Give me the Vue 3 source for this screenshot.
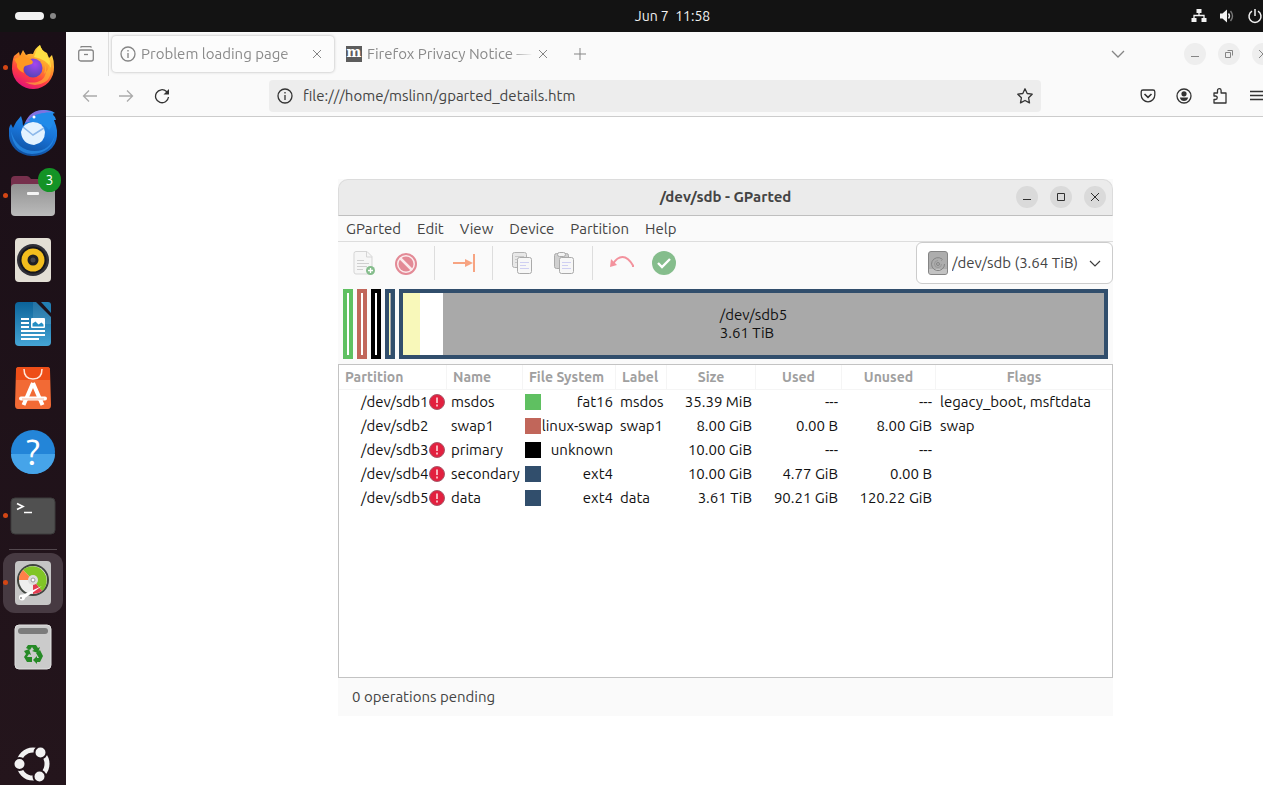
<template>
    <div class="desktop">
        <header class="topbar">
            <button class="activities" aria-label="Activities">
                <span class="workspace-pill"></span>
                <span class="workspace-dot"></span>
            </button>
            <time class="clock">Jun 7&nbsp; 11:58</time>
            <div class="tray">
                <svg width="16" height="16" viewBox="0 0 16 16">
                    <path d="M5.500 1h5v4h-5zM0.500 10h5v4h-5zM10.500 10h5v4h-5z" fill="#f2f2f2" />
                    <path d="M8 5v2.500M3 10V7.500h10V10" fill="none" stroke="#f2f2f2" stroke-width="1.300" />
                </svg>
                <svg width="16" height="16" viewBox="0 0 16 16">
                    <path d="M1 5.500h2.500L8 1.500v13L3.500 10.500H1z" fill="#f2f2f2" />
                    <path d="M9.500 5.500q2 2.500 0 5" fill="none" stroke="#f2f2f2" stroke-width="1.400" />
                    <path d="M11.500 3q4 5 0 10" fill="none" stroke="#777" stroke-width="1.400" />
                </svg>
                <svg width="16" height="16" viewBox="0 0 16 16" fill="none" stroke="#f2f2f2" stroke-width="1.500">
                    <path d="M5 3.200A6 6 0 1 0 11 3.200M8 1v7" />
                </svg>
            </div>
        </header>

        <div class="workspace">
            <nav class="dock" aria-label="Dock">
                <button class="dock-item running" aria-label="Firefox">
                    <svg width="48" height="48" viewBox="0 0 48 48">
                        <defs>
                            <linearGradient id="fox" x1="0.800" y1="0" x2="0.300" y2="1">
                                <stop offset="0" stop-color="#fff14a" />
                                <stop offset="0.400" stop-color="#ff9a2a" />
                                <stop offset="0.700" stop-color="#ff4040" />
                                <stop offset="1" stop-color="#e0107a" />
                            </linearGradient>
                            <radialGradient id="globe" cx="0.600" cy="0.300" r="0.800">
                                <stop offset="0" stop-color="#a545f0" />
                                <stop offset="1" stop-color="#4b45b0" />
                            </radialGradient>
                        </defs>
                        <path d="M5 12L10 8 11 12 14 6 17 11Q21 9 24 10Q26 4 31 1Q32 6 38 9L40 14 43 11Q45 16 45 23A21 21 0 0 1 3 25Q3 17 5 12Z" fill="url(#fox)" />
                        <path d="M25 13q3-9 6-12q1 5 6 9q5 6 5 14q-5-9-17-11z" fill="#ffe044" />
                        <circle cx="24" cy="24" r="9.500" fill="url(#globe)" />
                        <path d="M5 15l5-2 4-4 3 5q5 0 7 4l-1 2-7 2q-3 3-1 7q-8-3-7-9z" fill="#ff9822" />
                        <path d="M30 14q9 6 5 16q6-5 5-12q5 14-4 20q-10 6-20 0q19 3 21-10q1-8-7-14z" fill="#ffbe32" opacity=".6" />
                    </svg>
                </button>
                <button class="dock-item" aria-label="Thunderbird">
                    <svg width="48" height="48" viewBox="0 0 48 48">
                        <defs>
                            <linearGradient id="bird" x1="0.700" y1="0" x2="0.400" y2="1">
                                <stop offset="0" stop-color="#2894f0" />
                                <stop offset="0.500" stop-color="#1874d8" />
                                <stop offset="1" stop-color="#104f9f" />
                            </linearGradient>
                        </defs>
                        <path d="M16 15Q22 2 36 2Q42 2 46 5L43 6Q46 8 47 12L45 12Q49 22 48 28A24 21 0 0 1 0 26Q-1 20 2 16Q3 18 4 20Q7 13 12 8Q14 13 14 18Z" fill="url(#bird)" />
                        <path d="M16 15Q21 2 35 2L44 4Q29 4 25 12Z" fill="#7f72e0" />
                        <path d="M19 12Q28 3 44 5Q46 16 40 22Q34 14 24 14Z" fill="#218be9" />
                        <path d="M12 24Q14 15 24 14Q34 14 36 24Q36 35 25 37Q13 36 12 24z" fill="#e3f2ff" />
                        <path d="M14 19l10 8 11-7" fill="none" stroke="#8cb8ea" stroke-width="1.500" />
                        <path d="M2 23q6 20 24 20q15 0 20-16q-3 18-23 19Q4 45 2 23z" fill="#2b91ed" opacity=".7" />
                        <circle cx="25" cy="9" r="1.500" fill="#fff" />
                    </svg>
                </button>
                <button class="dock-item running" aria-label="Files">
                    <svg width="48" height="48" viewBox="0 0 48 48">
                        <defs>
                            <linearGradient id="metal" x1="0" y1="0" x2="0" y2="1">
                                <stop offset="0" stop-color="#929292" />
                                <stop offset="1" stop-color="#bbb" />
                            </linearGradient>
                        </defs>
                        <path d="M2 8q0-4 4-4h12q2 0 4 3h20q4 0 4 4v12H2z" fill="#76304c" />
                        <rect x="2" y="12" width="44" height="32" rx="4" fill="url(#metal)" />
                        <rect x="18" y="20" width="12" height="3" rx="1" fill="#f4f4f4" />
                    </svg>
                    <span class="badge">3</span>
                </button>
                <button class="dock-item" aria-label="Rhythmbox">
                    <svg width="48" height="48" viewBox="0 0 48 48">
                        <rect x="6" y="2" width="36" height="44" rx="4" fill="#e3dfd5" />
                        <circle cx="24" cy="24" r="16" fill="#303038" />
                        <circle cx="24" cy="24" r="13.500" fill="#17171c" />
                        <circle cx="24" cy="24" r="11.500" fill="#f2bd1d" />
                        <circle cx="24" cy="24" r="5.500" fill="#202024" />
                        <circle cx="24" cy="24" r="2.500" fill="#45454b" />
                    </svg>
                </button>
                <button class="dock-item" aria-label="LibreOffice Writer">
                    <svg width="48" height="48" viewBox="0 0 48 48">
                        <defs>
                            <linearGradient id="writer" x1="0" y1="0" x2="0" y2="1">
                                <stop offset="0" stop-color="#0b6399" />
                                <stop offset="1" stop-color="#45a5d5" />
                            </linearGradient>
                        </defs>
                        <path d="M10 2h17l15 15v25q0 4-4 4H10q-4 0-4-4V6q0-4 4-4z" fill="url(#writer)" />
                        <path d="M24 2h3l15 15v7H24z" fill="#fff" opacity=".1" />
                        <path d="M32 2h7q3 0 3 3v8z" fill="#227eb2" />
                        <path d="M12 19h8M12 23h8M12 27h8M12 31h24M12 35h24M12 39h18" stroke="#fff" stroke-width="2" />
                        <rect x="22" y="18" width="14" height="10" rx="1" fill="#fff" />
                        <path d="M23.500 26.500v-3l3-2 3 3 3-2 2 2v2z" fill="#258fc4" />
                    </svg>
                </button>
                <button class="dock-item" aria-label="App Center">
                    <svg width="48" height="48" viewBox="0 0 48 48">
                        <path d="M10 3h28q3 0 3 3l1 35q0 4-3 4H9q-3 0-3-4L7 6q0-3 3-3z" fill="#f26a35" />
                        <path d="M10 3h28q3 0 3 3v10H7V6q0-3 3-3z" fill="#ee4e18" />
                        <path d="M15 5q0 10 9 10t9-10" fill="none" stroke="#ffe8dc" stroke-width="1.500" />
                        <g stroke="#fff" fill="none">
                            <path d="M24 19L14.500 41M24 19l9.500 22" stroke-width="4" />
                            <path d="M12 34.500h24" stroke-width="4" stroke-linecap="round" />
                        </g>
                        <path d="M13 35h22" stroke="#f6b8a0" />
                    </svg>
                </button>
                <button class="dock-item" aria-label="Help">
                    <svg width="48" height="48" viewBox="0 0 48 48">
                        <circle cx="24" cy="24" r="22" fill="#2385d8" />
                        <path d="M2 26a22 20 0 0 0 44 0z" fill="#46a4e9" />
                        <text x="24" y="37" text-anchor="middle" class="help-glyph">?</text>
                    </svg>
                </button>
                <button class="dock-item running" aria-label="Terminal">
                    <svg width="48" height="48" viewBox="0 0 48 48">
                        <rect x="2" y="6" width="44" height="36" rx="4" fill="#505050" stroke="#3c3c3c" />
                        <path d="M8 11.500l6 3-6 3" fill="none" stroke="#fff" stroke-width="1.700" />
                        <path d="M15 20.500h8" stroke="#fff" stroke-width="1.500" />
                    </svg>
                </button>
                <hr class="dock-separator" />
                <button class="dock-item running active" aria-label="GParted">
                    <svg width="48" height="48" viewBox="0 0 48 48">
                        <rect x="6" y="2" width="36" height="44" rx="4" fill="#c5c5c5" />
                        <circle cx="24" cy="21" r="16" fill="#404540" />
                        <circle cx="24" cy="21" r="14" fill="#eee" />
                        <path d="M24 21L14 11A14 14 0 1 1 33 32z" fill="#81c526" />
                        <path d="M24 21H10a14 14 0 0 1 4-10z" fill="#ff8148" />
                        <path d="M24 21l9 11q-4 3-9 3z" fill="#e33c50" />
                        <circle cx="24" cy="21" r="5" fill="#ddd" />
                        <circle cx="24" cy="21" r="2" fill="#fff" stroke="#999" />
                        <path d="M33 27L11 37l2 4z" fill="#fff" />
                        <circle cx="13" cy="38.500" r="3" fill="#fff" />
                        <circle cx="12" cy="39" r="1" fill="#888" />
                    </svg>
                </button>
                <button class="dock-item" aria-label="Trash">
                    <svg width="48" height="48" viewBox="0 0 48 48">
                        <rect x="6" y="2" width="36" height="44" rx="4" fill="#cbcbcb" stroke="#e0e0e0" />
                        <rect x="9" y="5" width="30" height="6" rx="3" fill="#7c7c7c" />
                        <g fill="#268a26">
                            <path d="M19 22h8l2 3 2-1-2 6-6-2 2-1-2-3-2 3-4-2z" />
                            <path d="M15 28l5-2 2 6-2-1-2 3h5v5h-5l-3-5 2-3z" />
                            <path d="M31 27l3 6-3 6h-3v2l-4-4 4-4v2h2l-3-5z" />
                        </g>
                    </svg>
                </button>
                <button class="dock-item show-apps" aria-label="Show Applications">
                    <svg width="48" height="48" viewBox="0 0 48 48">
                        <circle cx="24" cy="24" r="14" fill="none" stroke="#f2f2f2" stroke-width="5" />
                        <g fill="#f2f2f2" stroke="#22141b" stroke-width="2">
                            <circle cx="10.500" cy="24" r="6" />
                            <circle cx="31.500" cy="12.500" r="6" />
                            <circle cx="30.500" cy="36.500" r="6" />
                        </g>
                    </svg>
                </button>
            </nav>

            <main class="browser">
                <div class="tab-strip">
                    <button class="history-btn" aria-label="Firefox View">
                        <svg width="16" height="16" viewBox="0 0 16 16" class="line muted">
                            <path d="M2.500 1.500Q3 0.500 4 0.500h8q1 0 1.500 1" />
                            <rect x="0.700" y="4" width="14.600" height="11" rx="2" />
                            <path d="M6 8.500h4" />
                        </svg>
                    </button>
                    <div class="tab selected">
                        <svg width="16" height="16" viewBox="0 0 16 16" class="line muted">
                            <circle cx="8" cy="8" r="7" />
                            <path d="M8 7v5M8 4v1.500" />
                        </svg>
                        <span class="tab-title">Problem loading page</span>
                        <button class="tab-close" aria-label="Close tab">
                            <svg width="8" height="8" viewBox="0 0 8 8" class="line muted thin"><path d="M0 0l8 8M8 0L0 8" /></svg>
                        </button>
                    </div>
                    <div class="tab">
                        <span class="favicon">m</span>
                        <span class="tab-title">Firefox Privacy Notice —</span>
                        <button class="tab-close" aria-label="Close tab">
                            <svg width="8" height="8" viewBox="0 0 8 8" class="line muted thin"><path d="M0 0l8 8M8 0L0 8" /></svg>
                        </button>
                    </div>
                    <button class="tool new-tab" aria-label="New tab">
                        <svg width="12" height="12" viewBox="0 0 12 12" class="line muted thin"><path d="M6 0v12M0 6h12" /></svg>
                    </button>
                    <button class="tool all-tabs" aria-label="List all tabs">
                        <svg width="14" height="14" viewBox="0 0 14 14" class="line muted"><path d="M1 4l6 6 6-6" /></svg>
                    </button>
                    <div class="window-controls faded">
                        <button v-for="c in browserControls" :key="c.label" class="round" :aria-label="c.label">
                            <svg width="10" height="10" viewBox="0 0 10 10"><path :d="c.path" /></svg>
                        </button>
                    </div>
                </div>

                <div class="nav-bar">
                    <button class="tool" aria-label="Back">
                        <svg width="16" height="16" viewBox="0 0 16 16" class="line disabled"><path d="M15 8H1.500M7 2.500L1.500 8 7 13.500" /></svg>
                    </button>
                    <button class="tool" aria-label="Forward">
                        <svg width="16" height="16" viewBox="0 0 16 16" class="line disabled"><path d="M1 8h13.500M9 2.500L14.500 8 9 13.500" /></svg>
                    </button>
                    <button class="tool" aria-label="Reload">
                        <svg width="16" height="16" viewBox="0 0 16 16" class="line">
                            <path d="M14.500 9A6.500 6.500 0 1 1 12.500 3.500L14 5" />
                            <path d="M15 1v5.500H9.500z" fill="#333" stroke="none" />
                        </svg>
                    </button>
                    <div class="url-bar">
                        <svg width="16" height="16" viewBox="0 0 16 16" class="line">
                            <circle cx="8" cy="8" r="7" />
                            <path d="M8 7v5M8 4v1.500" />
                        </svg>
                        <input v-model="url" type="text" aria-label="Address" />
                        <button class="star" aria-label="Bookmark this page">
                            <svg width="16" height="16" viewBox="0 0 16 16" class="line">
                                <path d="M8 0.800l2.200 4.700 5 .7-3.600 3.600.9 5.100L8 12.500l-4.500 2.400.9-5.100L.8 6.200l5-.7z" stroke-linejoin="round" />
                            </svg>
                        </button>
                    </div>
                    <button class="tool" aria-label="Save to Pocket">
                        <svg width="16" height="16" viewBox="0 0 16 16" class="line">
                            <path d="M3 2h10q1.800 0 1.800 1.800V7a6.800 6.800 0 0 1-13.600 0V3.800Q1.200 2 3 2z" />
                            <path d="M4.500 6L8 9.300 11.500 6" stroke-width="1.600" />
                        </svg>
                    </button>
                    <button class="tool" aria-label="Account">
                        <svg width="16" height="16" viewBox="0 0 16 16" class="line">
                            <circle cx="8" cy="8" r="7" />
                            <circle cx="8" cy="5.800" r="2.600" fill="#333" stroke="none" />
                            <path d="M3.800 9.500h8.400q-1 3.500-4.200 3.500T3.800 9.500z" fill="#333" stroke="none" />
                        </svg>
                    </button>
                    <button class="tool" aria-label="Extensions">
                        <svg width="16" height="16" viewBox="0 0 16 16" class="line">
                            <path d="M2 5h3.500V2.500a1.800 1.800 0 0 1 3.600 0V5H14v10H2v-3.500h1.500a1.700 1.700 0 0 0 0-3.500H2z" stroke-linejoin="round" />
                        </svg>
                    </button>
                    <button class="tool" aria-label="Menu">
                        <svg width="14" height="14" viewBox="0 0 14 14" class="line"><path d="M1 2.500h13M1 6.500h13M1 10.500h13" /></svg>
                    </button>
                </div>

                <section class="page">
                    <article class="gparted">
                        <header class="titlebar">
                            <h1>/dev/sdb - GParted</h1>
                            <div class="window-controls">
                                <button v-for="c in windowControls" :key="c.label" class="round" :aria-label="c.label">
                                    <svg width="10" height="10" viewBox="0 0 10 10"><path :d="c.path" /></svg>
                                </button>
                            </div>
                        </header>

                        <nav class="menubar">
                            <button v-for="item in menu" :key="item">{{ item }}</button>
                        </nav>

                        <div class="toolbar">
                            <button aria-label="New">
                                <svg width="24" height="24" viewBox="0 0 24 24">
                                    <path d="M4 .5h11l5 5V21q0 2-2 2H4q-2 0-2-2V2.500Q2 .5 4 .5z" fill="#f6f6f6" stroke="#d5d5d5" />
                                    <path d="M14.500.5V6h5.500" fill="none" stroke="#d5d5d5" />
                                    <path d="M5 9.500h7M5 12.500h12M5 15.500h10M5 18.500h6" stroke="#cfcfcf" />
                                    <circle cx="18.500" cy="19.500" r="4.500" fill="#85bd8c" />
                                    <path d="M18.500 17v5M16 19.500h5" stroke="#fff" stroke-width="1.300" />
                                </svg>
                            </button>
                            <button aria-label="Delete">
                                <svg width="24" height="24" viewBox="0 0 24 24">
                                    <circle cx="12" cy="13" r="10" fill="#fbeaec" stroke="#e38a96" stroke-width="2" />
                                    <circle cx="12" cy="13" r="7.500" fill="#e38a96" />
                                    <path d="M6 7l12 12" stroke="#fbeaec" stroke-width="2.500" />
                                </svg>
                            </button>
                            <span class="separator"></span>
                            <button aria-label="Resize/Move">
                                <svg width="24" height="24" viewBox="0 0 24 24">
                                    <path d="M1 12h16M22 3v18" stroke="#f7a482" stroke-width="2" />
                                    <path d="M13 8l8 4-8 4z" fill="#f7a482" />
                                </svg>
                            </button>
                            <span class="separator"></span>
                            <button aria-label="Copy">
                                <svg width="24" height="24" viewBox="0 0 24 24">
                                    <rect x="2.500" y="1.500" width="14" height="15" rx="2" fill="#e8e8e8" stroke="#b2b2b2" />
                                    <path d="M5 5.500h9M5 8.500h5M5 11.500h3" stroke="#c8c8c8" />
                                    <rect x="7.500" y="6.500" width="14" height="16" rx="2" fill="#f7f7f7" stroke="#aaa" />
                                    <path d="M10 11.500h9M10 14.500h6M10 17.500h9" stroke="#cfcff2" />
                                </svg>
                            </button>
                            <button aria-label="Paste">
                                <svg width="24" height="24" viewBox="0 0 24 24">
                                    <rect x="2.500" y="2.500" width="14" height="15" rx="2" fill="#d0d0d0" stroke="#aaa" />
                                    <rect x="5.500" y="1.500" width="8" height="4" rx="2" fill="#f3f3f3" stroke="#aaa" />
                                    <rect x="7.500" y="6.500" width="14" height="16" rx="2" fill="#f7f7f7" stroke="#aaa" />
                                    <path d="M10 11.500h9M10 14.500h6M10 17.500h9" stroke="#cfcff2" />
                                </svg>
                            </button>
                            <span class="separator"></span>
                            <button aria-label="Undo">
                                <svg width="24" height="24" viewBox="0 0 24 24">
                                    <path d="M3 13Q7 6 12.500 6T23 14.500V16" fill="none" stroke="#f3929d" stroke-width="2" />
                                    <path d="M0 16l1-8 6 6z" fill="#f3929d" />
                                </svg>
                            </button>
                            <button aria-label="Apply">
                                <svg width="24" height="24" viewBox="0 0 24 24">
                                    <circle cx="12" cy="12" r="12" fill="#85bd8c" />
                                    <path d="M6 12l4 4 8-8" fill="none" stroke="#fff" stroke-width="2.400" />
                                </svg>
                            </button>
                            <label class="device">
                                <svg width="20" height="24" viewBox="0 0 20 24">
                                    <rect x="0.500" y="0.500" width="19" height="23" rx="2.500" fill="#adadad" stroke="#858585" />
                                    <path d="M1 18h18v3q0 2-2 2H3q-2 0-2-2z" fill="#c3c3c3" />
                                    <g fill="none" stroke="#858585">
                                        <path d="M14 8A6.500 6.500 0 1 0 16.500 13" />
                                        <circle cx="10" cy="13" r="1.500" />
                                        <path d="M10 9.500a3.500 3.500 0 1 0 3.500 3.500M13 10l2-2" stroke="#979797" />
                                    </g>
                                </svg>
                                <select v-model="device" aria-label="Device">
                                    <option>/dev/sdb (3.64 TiB)</option>
                                </select>
                                <svg width="12" height="12" viewBox="0 0 12 12" fill="none" stroke="#3d3d3d" stroke-width="1.200"><path d="M1 4l5 5 5-5" /></svg>
                            </label>
                        </div>

                        <div class="disk-map">
                            <div class="slice fat16"></div>
                            <div class="slice swap"></div>
                            <div class="slice unknown"></div>
                            <div class="slice ext4 full"></div>
                            <div class="slice ext4 data">
                                <span>/dev/sdb5<br />3.61 TiB</span>
                            </div>
                        </div>

                        <div class="table-box">
                            <table>
                                <colgroup>
                                    <col v-for="c in columns" :key="c" :class="'col-' + c.toLowerCase().replace(' ', '-')" />
                                </colgroup>
                                <thead>
                                    <tr>
                                        <th v-for="c in columns" :key="c" scope="col">{{ c }}</th>
                                    </tr>
                                </thead>
                                <tbody>
                                    <tr v-for="p in partitions" :key="p.path">
                                        <td>
                                            <div class="path">
                                                {{ p.path }}
                                                <svg v-if="p.warning" width="16" height="16" viewBox="0 0 16 16">
                                                    <circle cx="8" cy="8" r="7.500" fill="#e2203f" stroke="#a8596a" />
                                                    <path d="M8 3.500v5.500M8 10.500v2" stroke="#f9b4bd" stroke-width="2" />
                                                </svg>
                                            </div>
                                        </td>
                                        <td>{{ p.name }}</td>
                                        <td>
                                            <div class="fs">
                                                <i class="swatch" :class="p.color"></i>{{ p.fs }}
                                            </div>
                                        </td>
                                        <td>{{ p.label }}</td>
                                        <td class="num">{{ p.size }}</td>
                                        <td class="num">{{ p.used }}</td>
                                        <td class="num">{{ p.unused }}</td>
                                        <td>{{ p.flags }}</td>
                                    </tr>
                                </tbody>
                            </table>
                        </div>

                        <footer class="status">0 operations pending</footer>
                    </article>
                </section>
            </main>
        </div>
    </div>
</template>

<script setup>
import { ref } from 'vue';

const url = ref('file:///home/mslinn/gparted_details.htm');
const device = ref('/dev/sdb (3.64 TiB)');

const menu = ['GParted', 'Edit', 'View', 'Device', 'Partition', 'Help'];

const columns = ['Partition', 'Name', 'File System', 'Label', 'Size', 'Used', 'Unused', 'Flags'];

const browserControls = [
    { label: 'Minimize', path: 'M1 7.500h8' },
    { label: 'Restore', path: 'M1.500 3.500h5v5h-5zM3.500 1.500h5v5' },
    { label: 'Close', path: 'M1 1l8 8M9 1L1 9' },
];

const windowControls = [
    { label: 'Minimize', path: 'M1 7.500h8' },
    { label: 'Maximize', path: 'M1.500 1.500h7v7h-7z' },
    { label: 'Close', path: 'M1 1l8 8M9 1L1 9' },
];

const partitions = [
    { path: '/dev/sdb1', warning: true, name: 'msdos', fs: 'fat16', color: 'fat16', label: 'msdos', size: '35.39 MiB', used: '---', unused: '---', flags: 'legacy_boot, msftdata' },
    { path: '/dev/sdb2', warning: false, name: 'swap1', fs: 'linux-swap', color: 'swap', label: 'swap1', size: '8.00 GiB', used: '0.00 B', unused: '8.00 GiB', flags: 'swap' },
    { path: '/dev/sdb3', warning: true, name: 'primary', fs: 'unknown', color: 'unknown', label: '', size: '10.00 GiB', used: '---', unused: '---', flags: '' },
    { path: '/dev/sdb4', warning: true, name: 'secondary', fs: 'ext4', color: 'ext4', label: '', size: '10.00 GiB', used: '4.77 GiB', unused: '0.00 B', flags: '' },
    { path: '/dev/sdb5', warning: true, name: 'data', fs: 'ext4', color: 'ext4', label: 'data', size: '3.61 TiB', used: '90.21 GiB', unused: '120.22 GiB', flags: '' },
];
</script>

<style>
body {
    margin: 0;
    overflow: hidden;
}
</style>

<style scoped>
.desktop {
    display: flex;
    flex-direction: column;
    height: 100vh;
    overflow: hidden;
    background: #fff;
    color: #444;
    font-family: Ubuntu, "Noto Sans", "Open Sans", sans-serif;
    font-size: 15px;
    line-height: 18px;
}

* {
    box-sizing: border-box;
}

button {
    display: flex;
    align-items: center;
    justify-content: center;
    flex: none;
    margin: 0;
    padding: 0;
    border: none;
    background: transparent;
    color: inherit;
    font: inherit;
}

svg {
    flex: none;
}

/* top panel */
.topbar {
    display: flex;
    align-items: center;
    flex: none;
    height: 32px;
    background: #131313;
    color: #f2f2f2;
    font-size: 14px;
}

.activities {
    justify-content: flex-start;
    gap: 6px;
    width: 154px;
    padding-left: 15px;
}

.workspace-pill {
    width: 29px;
    height: 8px;
    border-radius: 4px;
    background: #f2f2f2;
}

.workspace-dot {
    width: 6px;
    height: 6px;
    border-radius: 50%;
    background: #888;
}

.clock {
    flex: 1;
    text-align: center;
}

.tray {
    display: flex;
    gap: 12px;
}

.workspace {
    display: flex;
    flex: 1;
    min-height: 0;
}

/* dock */
.dock {
    display: flex;
    flex-direction: column;
    flex: none;
    width: 66px;
    padding-top: 4px;
    background: linear-gradient(#1a0f17, #24151c);
}

.dock-item {
    position: relative;
    height: 64px;
}

.dock-item.running::before {
    content: "";
    position: absolute;
    left: 3px;
    top: 29px;
    width: 5px;
    height: 5px;
    border-radius: 50%;
    background: #d34615;
}

.dock-item.active {
    height: 60px;
    margin: 2px 3px;
    border-radius: 12px;
    background: #473a42;
}

.dock-item.active::before {
    left: 0;
    top: 27px;
}

.badge {
    position: absolute;
    top: 4px;
    right: 5px;
    width: 23px;
    height: 24px;
    border-radius: 12px;
    background: #149326;
    color: #fff;
    font-size: 14px;
    line-height: 24px;
    text-align: center;
}

.help-glyph {
    fill: #fff;
    font-size: 36px;
}

.dock-separator {
    width: 48px;
    height: 1px;
    margin: 1px auto;
    border: none;
    background: #54494f;
}

.show-apps {
    height: 42px;
    margin-top: auto;
}

/* browser, its right edge runs off the screen */
.browser {
    display: flex;
    flex-direction: column;
    flex: 1;
    min-width: 0;
    margin-right: -16px;
}

.line {
    fill: none;
    stroke: #333;
    stroke-width: 1.300px;
}

.muted {
    stroke: #858585;
}

.thin {
    stroke-width: 1px;
}

.disabled {
    stroke: #aaa;
}

.tab-strip {
    display: flex;
    align-items: center;
    flex: none;
    height: 44px;
    padding-right: 5px;
    background: #fafafa;
    color: #8a8a8a;
}

.history-btn {
    align-self: stretch;
    width: 43px;
    padding-right: 2px;
    border-right: 1px solid #ddd;
}

.tab {
    display: flex;
    align-items: center;
    gap: 5px;
    width: 222px;
    height: 36px;
    margin-left: 4px;
    padding: 0 12px 0 8px;
    border-radius: 4px;
}

.tab.selected {
    margin-left: 3px;
    background: #fcfcfc;
    box-shadow: 0 0 3px rgba(0, 0, 0, 0.3);
}

.tab-title {
    flex: 1;
    overflow: hidden;
    white-space: nowrap;
    mask-image: linear-gradient(to left, transparent, #000 24px);
}

.tab-close {
    width: 10px;
    height: 16px;
}

.favicon {
    width: 16px;
    height: 16px;
    background: #5c5c5c;
    color: #fff;
    font: bold 14px/13px "DejaVu Serif", serif;
    text-align: center;
}

.tool {
    width: 36px;
    height: 36px;
}

.new-tab {
    margin-left: 2px;
}

.all-tabs {
    margin-left: auto;
    margin-right: 48px;
}

.window-controls {
    display: flex;
    gap: 12px;
}

.round {
    width: 22px;
    height: 22px;
    border-radius: 50%;
    background: #dadada;
}

.round path {
    fill: none;
    stroke: #303030;
    stroke-width: 1px;
}

.faded .round {
    background: #eee;
}

.faded .round path {
    stroke: #858585;
}

.nav-bar {
    display: flex;
    align-items: center;
    flex: none;
    height: 41px;
    padding: 0 5px 0 6px;
    border-bottom: 1px solid #ccc;
    background: #fafafa;
}

.url-bar {
    display: flex;
    align-items: center;
    flex: 1;
    gap: 10px;
    height: 32px;
    margin: 0 89px;
    padding: 0 8px;
    border-radius: 4px;
    background: #ededed;
}

.url-bar input {
    flex: 1;
    min-width: 0;
    padding: 0;
    border: none;
    outline: none;
    background: transparent;
    color: #444;
    font: inherit;
}

.page {
    flex: 1;
    padding: 62px 166px 0 272px;
}

/* GParted window */
.gparted {
    background: #fafafa;
}

.titlebar {
    display: grid;
    grid-template-columns: 1fr auto 1fr;
    align-items: center;
    height: 37px;
    padding: 0 6px 2px;
    border: 1px solid #dcdcdc;
    border-bottom-color: #bfbfbf;
    border-radius: 10px 10px 0 0;
    background: #ebebeb;
}

.titlebar h1 {
    grid-column: 2;
    margin: 0;
    font-size: 15px;
    font-weight: bold;
}

.titlebar .window-controls {
    justify-self: end;
}

.menubar {
    display: flex;
    gap: 16px;
    height: 26px;
    padding: 0 8px;
    border-bottom: 1px solid #ddd;
}

.toolbar {
    display: flex;
    align-items: center;
    height: 42px;
    padding-left: 5px;
}

.toolbar button {
    width: 42px;
    height: 42px;
}

.separator {
    width: 1px;
    height: 34px;
    margin: 0 8px 0 7px;
    background: #ddd;
}

.device {
    display: flex;
    align-items: center;
    gap: 4px;
    width: 197px;
    height: 42px;
    margin-left: auto;
    padding: 0 11px;
    border: 1px solid #ccc;
    border-radius: 6px;
    background: #fff;
}

.device select {
    flex: 1;
    min-width: 0;
    padding: 0;
    border: none;
    background: transparent;
    color: inherit;
    font: inherit;
    appearance: none;
}

.disk-map {
    display: flex;
    gap: 4px;
    padding: 5px;
}

.slice {
    width: 10px;
    height: 70px;
    border: 4px solid;
    background: #fff;
}

.slice.fat16 {
    border-color: #5fc061;
}

.slice.swap {
    border-color: #c1665a;
}

.slice.unknown {
    border-color: #000;
}

.slice.ext4 {
    border-color: #314e6c;
}

.slice.full {
    background: linear-gradient(to right, #f8f8ba 50%, #a9a9a9 50%);
}

.slice.data {
    display: flex;
    align-items: center;
    justify-content: center;
    flex: 1;
    background: linear-gradient(to right, #f8f8ba 2.430%, #fff 2.430%, #fff 5.700%, #a9a9a9 5.700%) padding-box;
    color: #111;
}

.table-box {
    min-height: 314px;
    border: 1px solid #c3c3c3;
    background: #fff;
    color: #111;
}

table {
    width: 100%;
    border-collapse: separate;
    border-spacing: 0;
    table-layout: fixed;
}

.col-partition {
    width: 108px;
}

.col-name {
    width: 76px;
}

.col-file-system {
    width: 93px;
}

.col-label {
    width: 51px;
}

.col-size {
    width: 89px;
}

.col-used {
    width: 86px;
}

.col-unused {
    width: 94px;
}

th {
    height: 25px;
    padding: 0 6px;
    border-right: 1px solid #f5f5f5;
    border-bottom: 1px solid #f5f5f5;
    color: #a0a0a0;
    font-size: 14px;
    font-weight: bold;
    text-align: center;
    white-space: nowrap;
}

th:nth-child(-n + 4) {
    text-align: left;
}

th:last-child {
    border-right: none;
}

td {
    height: 24px;
    padding: 0 4px;
    white-space: nowrap;
}

.path {
    display: flex;
    align-items: center;
    gap: 1px;
    padding-left: 18px;
}

.fs {
    display: flex;
    align-items: center;
    justify-content: space-between;
    margin: 0 -1px 0 -2px;
}

.swatch {
    width: 16px;
    height: 16px;
}

.swatch.fat16 {
    background: #5fc061;
}

.swatch.swap {
    background: #c1665a;
}

.swatch.unknown {
    background: #000;
}

.swatch.ext4 {
    background: #314e6c;
}

.num {
    text-align: right;
}

.status {
    height: 38px;
    padding: 0 14px;
    line-height: 38px;
}
</style>
